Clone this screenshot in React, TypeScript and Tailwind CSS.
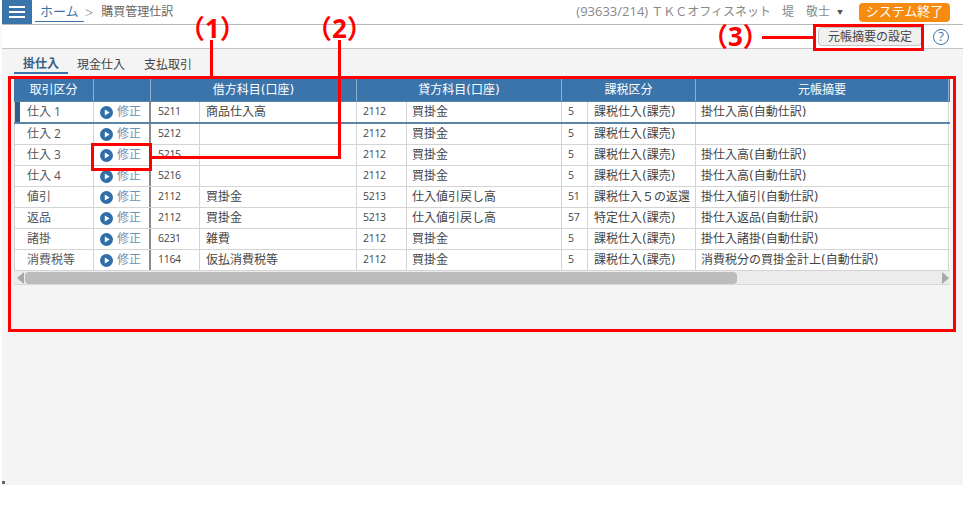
const rows = [
  ['仕入 1', '5211', '商品仕入高', '2112', '買掛金', '5', '課税仕入(課売)', '掛仕入高(自動仕訳)'],
  ['仕入 2', '5212', '', '2112', '買掛金', '5', '課税仕入(課売)', ''],
  ['仕入 3', '5215', '', '2112', '買掛金', '5', '課税仕入(課売)', '掛仕入高(自動仕訳)'],
  ['仕入 4', '5216', '', '2112', '買掛金', '5', '課税仕入(課売)', '掛仕入高(自動仕訳)'],
  ['値引', '2112', '買掛金', '5213', '仕入値引戻し高', '51', '課税仕入５の返還', '掛仕入値引(自動仕訳)'],
  ['返品', '2112', '買掛金', '5213', '仕入値引戻し高', '57', '特定仕入(課売)', '掛仕入返品(自動仕訳)'],
  ['諸掛', '6231', '雑費', '2112', '買掛金', '5', '課税仕入(課売)', '掛仕入諸掛(自動仕訳)'],
  ['消費税等', '1164', '仮払消費税等', '2112', '買掛金', '5', '課税仕入(課売)', '消費税分の買掛金計上(自動仕訳)'],
]

function PlayIcon() {
  return (
    <svg width="13" height="13" viewBox="0 0 13 13" className="shrink-0">
      <circle cx="6.5" cy="6.5" r="6.5" fill="#2f6ea8" />
      <path d="M4.8 3.4 L9.6 6.5 L4.8 9.6 Z" fill="#fff" />
    </svg>
  )
}

function HeadCell({ w, label }: { w: string; label: string }) {
  return <div className={`${w} flex items-center justify-center border-r border-[#8fb0d0] text-[12px] text-white`}>{label}</div>
}

function Row({ r, i }: { r: string[]; i: number }) {
  const first = i === 0
  const code = "font-['Open_Sans'] text-[10.5px] tracking-[-0.3px]"
  return (
    <div className={`flex text-[12px] text-[#444] ${first ? 'h-[22px] border-b-2 border-[#5b84aa]' : 'h-[21px] border-b border-[#d4d4d4]'}`}>
      <div className="relative flex w-[80px] items-center border-x border-[#d4d4d4] pl-3 font-['Open_Sans','Noto_Sans_CJK_JP'] text-[#555]">
        {first && <div className="absolute top-0 bottom-0 left-0 w-[5px] bg-[#2f5f8f]" />}
        {r[0]}
      </div>
      <div className="flex w-[57px] items-center gap-[4px] border-r-2 border-[#8a8a8a] pl-[6px] text-[#6f93b8]">
        <PlayIcon />
        修正
      </div>
      <div className={`flex w-[49px] items-center border-r border-[#d4d4d4] pl-[7px] ${code}`}>{r[1]}</div>
      <div className="flex w-[157px] items-center border-r border-[#d4d4d4] pl-[6px]">{r[2]}</div>
      <div className={`flex w-[50px] items-center border-r border-[#d4d4d4] pl-[6px] ${code}`}>{r[3]}</div>
      <div className="flex w-[155px] items-center border-r border-[#d4d4d4] pl-[5px]">{r[4]}</div>
      <div className={`flex w-[26px] items-center border-r border-[#d4d4d4] pl-[6px] ${code}`}>{r[5]}</div>
      <div className="flex w-[108px] items-center border-r border-[#d4d4d4] pl-[6px]">{r[6]}</div>
      <div className="flex w-[253px] items-center border-r border-[#d4d4d4] pl-[5px]">{r[7]}</div>
    </div>
  )
}

export default function App() {
  return (
    <div
      className="relative h-[518px] w-[963px] overflow-hidden bg-white pl-[2px]"
      style={{ fontFamily: '"Open Sans", "Noto Sans CJK JP", sans-serif' }}
    >
      {/* header */}
      <div className="flex h-[25px] items-center border-b border-[#bdbdbd] bg-white">
        <div className="flex h-[24px] w-[30px] items-center justify-center bg-[#3b74ab]">
          <svg width="16" height="12" viewBox="0 0 16 12">
            <rect x="0" y="0" width="16" height="2" fill="#fff" />
            <rect x="0" y="5" width="16" height="2" fill="#fff" />
            <rect x="0" y="10" width="16" height="2" fill="#fff" />
          </svg>
        </div>
        <div className="ml-[3px] flex h-[20px] items-center border-b border-[#3b74ab] px-[5px] text-[13px] leading-none text-[#3b74ab]">ホーム</div>
        <span className="ml-[1px] text-[15px] leading-none font-light text-[#777]">&gt;</span>
        <span className="ml-[8px] text-[12px] text-[#666]">購買管理仕訳</span>
        <div className="ml-auto flex items-center text-[#888]">
          <span className="text-[13px]">(93633/214)</span>
          <span className="ml-[3px] text-[12px]">ＴＫＣオフィスネット</span>
          <span className="ml-[11px] text-[12px]">堤　敬士</span>
          <span className="ml-[7px] text-[6px] text-[#555]">▼</span>
        </div>
        <div className="mr-[13px] ml-[16px] flex h-[19px] w-[91px] items-center justify-center rounded-sm bg-[#f68b0f] text-[13px] text-white">システム終了</div>
      </div>

      {/* sub bar */}
      <div className="flex h-[24px] items-center justify-end border-b border-[#c4c4c4] bg-white shadow-sm">
        <div className="flex h-[19px] w-[104px] items-center justify-center rounded-sm border border-[#c4c4c4] bg-[#f0f0f0] text-[12px] text-[#444]">元帳摘要の設定</div>
        <div className="mr-[14px] ml-[11px] flex h-[16px] w-[16px] items-center justify-center rounded-full border border-[#3b74ab] text-[13px] leading-none text-[#3b74ab]">?</div>
      </div>

      {/* body */}
      <div className="h-[436px] bg-[#f4f4f4] pt-[6px] pl-[12px]">
        <div className="flex h-[19px] text-[12px] text-[#444]">
          <div className="flex w-[54px] items-center justify-center border-b-2 border-[#3b74ab] font-semibold text-[#3a5f85]">掛仕入</div>
          <div className="flex w-[66px] items-center justify-center">現金仕入</div>
          <div className="flex w-[68px] items-center justify-center">支払取引</div>
        </div>
        <div className="mt-[5px] w-[936px]" style={{ fontFamily: '"DejaVu Sans", "Noto Sans CJK JP", sans-serif' }}>
          <div className="flex h-[22px] bg-[#3b74ab]">
            <HeadCell w="w-[80px]" label="取引区分" />
            <HeadCell w="w-[57px]" label="" />
            <HeadCell w="w-[206px]" label="借方科目(口座)" />
            <HeadCell w="w-[205px]" label="貸方科目(口座)" />
            <HeadCell w="w-[134px]" label="課税区分" />
            <HeadCell w="w-[253px]" label="元帳摘要" />
          </div>
          <div className="border-t border-[#5b84aa] bg-white">
            {rows.map((r, i) => (
              <Row key={r[0]} r={r} i={i} />
            ))}
          </div>
          {/* scrollbar */}
          <div className="flex h-[14px] items-center border-b border-[#d8d8d8] bg-[#ececec] pr-[1px] pl-[3px]">
            <div className="h-0 w-0 border-y-[6px] border-r-[7px] border-y-transparent border-r-[#a8a8a8]" />
            <div className="ml-[1px] h-[12px] w-[712px] rounded-sm bg-[#bcbcbc]" />
            <div className="ml-auto h-0 w-0 border-y-[6px] border-l-[7px] border-y-transparent border-l-[#a8a8a8]" />
          </div>
        </div>
      </div>

      {/* annotations */}
      <div className="absolute top-[76px] left-[8px] h-[256px] w-[948px] border-[3px] border-[#ff0000]" />
      <div className="absolute top-[143px] left-[91px] h-[28px] w-[61px] border-[3px] border-[#ff0000]" />
      <div className="absolute top-[24px] left-[813px] h-[27px] w-[111px] border-[3px] border-[#ff0000]" />
      <div className="absolute top-[40px] left-[210px] h-[37px] w-[3px] bg-[#ff0000]" />
      <div className="absolute top-[40px] left-[338px] h-[119px] w-[3px] bg-[#ff0000]" />
      <div className="absolute top-[156px] left-[152px] h-[3px] w-[189px] bg-[#ff0000]" />
      <div className="absolute top-[36px] left-[762px] h-[3px] w-[52px] bg-[#ff0000]" />
      <div className="absolute top-[14px] left-[179px] text-[26px] leading-[28px] font-bold text-[#ff0000]">（1）</div>
      <div className="absolute top-[14px] left-[306px] text-[26px] leading-[28px] font-bold text-[#ff0000]">（2）</div>
      <div className="absolute top-[22px] left-[702px] text-[26px] leading-[28px] font-bold text-[#ff0000]">（3）</div>
      <div className="absolute top-[481px] left-[2px] h-[3px] w-[3px] bg-[#666]" />
    </div>
  )
}
